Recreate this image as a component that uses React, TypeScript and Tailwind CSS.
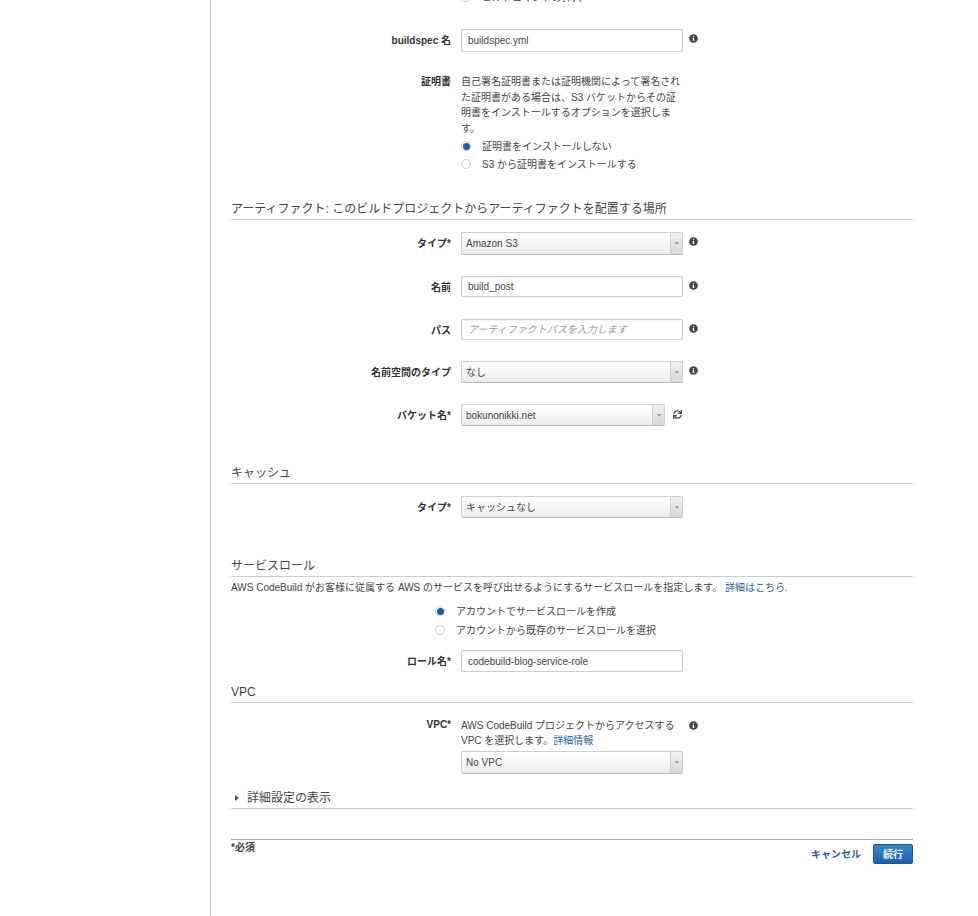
import { FaInfoCircle, FaSync } from "react-icons/fa";
import type { ReactNode } from "react";

const font = "[font-family:'Liberation_Sans','Noto_Sans_CJK_JP',sans-serif]";

const InfoIcon = () => <FaInfoCircle size={9} className="shrink-0 text-[#444]" />;

const Row = ({ label, className, labelPad = "pt-[5px]", children }: { label: string; className?: string; labelPad?: string; children: ReactNode }) => (
  <div className={`flex ${className ?? ""}`}>
    <div className={`w-[220px] shrink-0 text-right font-bold text-[10px] leading-[14px] text-[#333] ${labelPad}`}>{label}</div>
    <div className="ml-[10px] flex-1">{children}</div>
  </div>
);

const TextBox = ({ value, placeholder, h = "h-[23px]" }: { value?: string; placeholder?: string; h?: string }) => (
  <div className={`w-[222px] ${h} flex items-center rounded-[2px] border border-[#cfcfcf] bg-white px-[6px] text-[10px] shadow-[inset_0_1px_1px_rgba(0,0,0,0.05)]`}>
    {placeholder ? <span className="italic text-[#999]">{placeholder}</span> : <span className="text-[#444]">{value}</span>}
  </div>
);

const Select = ({ value, w = "w-[222px]", h = "h-[23px]" }: { value: string; w?: string; h?: string }) => (
  <div className={`${w} ${h} flex rounded-[2px] border border-[#d0d0d0] border-b-[#b8b8b8] bg-gradient-to-b from-white to-[#ececec] text-[10px] text-[#444]`}>
    <div className="flex-1 flex items-center pl-[4px]">{value}</div>
    <div className="w-[12px] border-l border-[#cfcfcf] bg-gradient-to-b from-[#f0f0f0] to-[#d8d8d8] flex items-center justify-center">
      <span className="block w-0 h-0 border-x-[2px] border-x-transparent border-t-[3px] border-t-[#999]" />
    </div>
  </div>
);

const Radio = ({ label, checked, className }: { label: string; checked?: boolean; className?: string }) => (
  <div className={`flex items-center text-[10px] text-[#444] ${className ?? ""}`}>
    <span className="w-[10px] h-[10px] rounded-full border border-[#cfcfcf] bg-white flex items-center justify-center shrink-0">
      {checked && <span className="block w-[7px] h-[7px] rounded-full bg-[#1560b4]" />}
    </span>
    <span className="ml-[11px]">{label}</span>
  </div>
);

const Heading = ({ children, className }: { children: ReactNode; className?: string }) => (
  <div className={`border-b border-[#ccc] text-[12px] leading-[16px] pb-[2px] text-[#444] ${className ?? ""}`}>{children}</div>
);

export default function App() {
  return (
    <div className={`${font} flex h-[916px] w-[978px] overflow-hidden bg-white`}>
      <div className="w-[211px] shrink-0 border-r border-[#d0d0d0]" />
      <main className="w-[682px] ml-[20px] shrink-0">
        <div className="ml-[230px] -mt-[10px]">
          <Radio label="ビルドコマンドの挿入" className="h-[14px]" />
        </div>

        <Row label="buildspec 名" className="mt-[25px]">
          <div className="flex">
            <TextBox value="buildspec.yml" />
            <div className="ml-[6px] pt-[5px]"><InfoIcon /></div>
          </div>
        </Row>

        <Row label="証明書" labelPad="pt-[1px]" className="mt-[22px]">
          <p className="w-[224px] text-[10px] leading-[15.5px] text-[#444]">
            自己署名証明書または証明機関によって署名された証明書がある場合は、S3 バケットからその証明書をインストールするオプションを選択します。
          </p>
          <Radio label="証明書をインストールしない" checked className="mt-[2px] h-[16px]" />
          <Radio label="S3 から証明書をインストールする" className="mt-[2px] h-[16px]" />
        </Row>

        <Heading className="mt-[29px]">アーティファクト: このビルドプロジェクトからアーティファクトを配置する場所</Heading>

        <Row label="タイプ*" className="mt-[12px]">
          <div className="flex">
            <Select value="Amazon S3" />
            <div className="ml-[6px] pt-[5px]"><InfoIcon /></div>
          </div>
        </Row>
        <Row label="名前" className="mt-[21px]">
          <div className="flex">
            <TextBox value="build_post" h="h-[21px]" />
            <div className="ml-[6px] pt-[5px]"><InfoIcon /></div>
          </div>
        </Row>
        <Row label="パス" className="mt-[22px]">
          <div className="flex">
            <TextBox placeholder="アーティファクトパスを入力します" h="h-[21px]" />
            <div className="ml-[6px] pt-[5px]"><InfoIcon /></div>
          </div>
        </Row>
        <Row label="名前空間のタイプ" className="mt-[21px]">
          <div className="flex">
            <Select value="なし" h="h-[22px]" />
            <div className="ml-[6px] pt-[5px]"><InfoIcon /></div>
          </div>
        </Row>
        <Row label="バケット名*" className="mt-[21px]">
          <div className="flex">
            <Select value="bokunonikki.net" w="w-[204px]" h="h-[22px]" />
            <div className="ml-[8px] pt-[6px]"><FaSync size={9} className="text-[#444]" /></div>
          </div>
        </Row>

        <Heading className="mt-[39px]">キャッシュ</Heading>
        <Row label="タイプ*" className="mt-[12px]">
          <Select value="キャッシュなし" h="h-[22px]" />
        </Row>

        <Heading className="mt-[40px]">サービスロール</Heading>
        <p className="mt-[4px] text-[10px] leading-[14px] text-[#444]">
          AWS CodeBuild がお客様に従属する AWS のサービスを呼び出せるようにするサービスロールを指定します。 <span className="text-[#2a5fa5]">詳細はこちら.</span>
        </p>
        <div className="ml-[204px] mt-[8px]">
          <Radio label="アカウントでサービスロールを作成" checked className="h-[16px]" />
          <Radio label="アカウントから既存のサービスロールを選択" className="mt-[3px] h-[16px]" />
        </div>
        <Row label="ロール名*" className="mt-[12px]">
          <TextBox value="codebuild-blog-service-role" h="h-[22px]" />
        </Row>

        <Heading className="mt-[12px]">VPC</Heading>
        <Row label="VPC*" labelPad="pt-[0px]" className="mt-[15px]">
          <div className="flex">
            <p className="w-[222px] text-[10px] leading-[15px] text-[#444]">
              AWS CodeBuild プロジェクトからアクセスする VPC を選択します。<span className="text-[#2a5fa5]">詳細情報</span>
            </p>
            <div className="ml-[6px] pt-[3px]"><InfoIcon /></div>
          </div>
          <div className="mt-[3px]"><Select value="No VPC" /></div>
        </Row>

        <div className="mt-[16px] flex items-center border-b border-[#ccc] pb-[2px] text-[12px] leading-[16px] text-[#444]">
          <span className="ml-[4px] w-0 h-0 border-y-[3px] border-y-transparent border-l-[4px] border-l-[#555]" />
          <span className="ml-[8px]">詳細設定の表示</span>
        </div>

        <div className="mt-[30px] border-t border-[#aaa] flex justify-between">
          <span className="text-[10px] font-bold leading-[14px] text-[#444] pt-[1px]">*必須</span>
          <div className="flex items-center mt-[4px]">
            <a className="text-[10px] font-bold text-[#1f5ba8]">キャンセル</a>
            <button className="ml-[12px] w-[40px] h-[20px] rounded-[2px] border border-[#155a9e] bg-gradient-to-b from-[#3a87cf] to-[#1560b4] text-[10px] font-bold text-white">続行</button>
          </div>
        </div>
      </main>
    </div>
  );
}
